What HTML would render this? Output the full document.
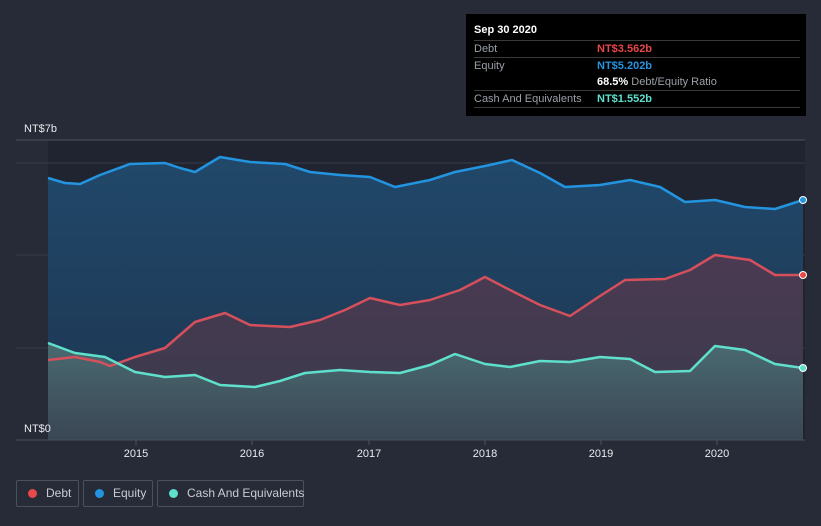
<!DOCTYPE html>
<html><head><style>
html,body{margin:0;width:821px;height:526px;overflow:hidden}
body{background:#262b37;font-family:"Liberation Sans",sans-serif;position:relative}
.tt{position:absolute;left:466px;top:14px;width:340px;height:102px;background:#000;color:#fff;font-size:11px}
.tt .r{position:absolute;left:8px;right:6px;border-top:1px solid #3a3a3a;height:17px;line-height:17px}
.lab{color:#9aa0a8}
.leg{position:absolute;top:480px;height:27px;border:1px solid #4a505c;border-radius:2px;color:#c8ccd2;font-size:12px;line-height:25px;box-sizing:border-box;white-space:nowrap}
.dot{display:inline-block;width:9px;height:9px;border-radius:50%;margin:0 9px 0 11px;vertical-align:-1px}
</style></head><body>
<svg width="821" height="526" style="position:absolute;left:0;top:0">
<defs>
<linearGradient id="ge" x1="0" y1="0" x2="0" y2="1"><stop offset="0" stop-color="#21486a"/><stop offset="1" stop-color="#1d3550"/></linearGradient>
<linearGradient id="gd" x1="0" y1="0" x2="0" y2="1"><stop offset="0" stop-color="#4a3a52"/><stop offset="1" stop-color="#3a3a4c"/></linearGradient>
<linearGradient id="gc" x1="0" y1="0" x2="0" y2="1"><stop offset="0" stop-color="#4a6a70"/><stop offset="1" stop-color="#3a4654"/></linearGradient>
</defs>
<rect x="48" y="140" width="757" height="300" fill="#1f2430"/>
<line x1="16" y1="140" x2="805" y2="140" stroke="#4a505c"/>
<line x1="16" y1="163" x2="805" y2="163" stroke="#363c48"/>
<line x1="16" y1="255" x2="805" y2="255" stroke="#363c48"/>
<line x1="16" y1="348" x2="805" y2="348" stroke="#363c48"/>
<polygon fill="url(#ge)" points="48,178 65,183 80,184 100,175 130,164 165,163 180,168 195,172 220,157 250,162 285,164 310,172 340,175 370,177 395,187 430,180 455,172 485,166 512,160 540,173 565,187 600,185 630,180 660,187 685,202 715,200 745,207 775,209 803,200 803,440 48,440"/>
<polygon fill="url(#gd)" points="48,360 75,357 100,362 110,366 135,357 165,348 195,322 225,313 250,325 290,327 320,320 345,310 370,298 400,305 430,300 460,290 485,277 510,290 540,305 570,316 600,296 625,280 665,279 690,270 715,255 750,260 775,275 803,275 803,440 48,440"/>
<polygon fill="url(#gc)" points="48,343 75,353 105,357 135,372 165,377 195,375 220,385 255,387 280,381 305,373 340,370 370,372 400,373 430,365 455,354 485,364 510,367 540,361 570,362 600,357 630,359 655,372 690,371 715,346 745,350 775,364 803,368 803,440 48,440"/>
<g fill="none" stroke-width="2.5" stroke-linejoin="round">
<polyline stroke="#2394df" points="48,178 65,183 80,184 100,175 130,164 165,163 180,168 195,172 220,157 250,162 285,164 310,172 340,175 370,177 395,187 430,180 455,172 485,166 512,160 540,173 565,187 600,185 630,180 660,187 685,202 715,200 745,207 775,209 803,200"/>
<polyline stroke="#d6505c" points="48,360 75,357 100,362 110,366 135,357 165,348 195,322 225,313 250,325 290,327 320,320 345,310 370,298 400,305 430,300 460,290 485,277 510,290 540,305 570,316 600,296 625,280 665,279 690,270 715,255 750,260 775,275 803,275"/>
<polyline stroke="#5ee0cc" points="48,343 75,353 105,357 135,372 165,377 195,375 220,385 255,387 280,381 305,373 340,370 370,372 400,373 430,365 455,354 485,364 510,367 540,361 570,362 600,357 630,359 655,372 690,371 715,346 745,350 775,364 803,368"/>
</g>
<circle cx="803" cy="200" r="3.5" fill="#2394df" stroke="#fff" stroke-width="1"/>
<circle cx="803" cy="275" r="3.5" fill="#e84a4a" stroke="#fff" stroke-width="1"/>
<circle cx="803" cy="368" r="3.5" fill="#5ee0cc" stroke="#fff" stroke-width="1"/>
<line x1="16" y1="440" x2="805" y2="440" stroke="#4a505c"/>
<g stroke="#4a505c"><line x1="136" y1="440" x2="136" y2="445"/><line x1="252" y1="440" x2="252" y2="445"/><line x1="369" y1="440" x2="369" y2="445"/><line x1="485" y1="440" x2="485" y2="445"/><line x1="601" y1="440" x2="601" y2="445"/><line x1="717" y1="440" x2="717" y2="445"/></g>
<g fill="#e8eaee" font-size="11" font-family="Liberation Sans,sans-serif">
<g text-anchor="middle"><text x="136" y="457">2015</text><text x="252" y="457">2016</text><text x="369" y="457">2017</text><text x="485" y="457">2018</text><text x="601" y="457">2019</text><text x="717" y="457">2020</text></g>
<text x="24" y="132">NT$7b</text><text x="24" y="432">NT$0</text>
</g>
</svg>
<div class="tt">
<div style="position:absolute;left:8px;top:10px;font-weight:bold">Sep 30 2020</div>
<div class="r" style="top:26px"><span class="lab">Debt</span><span style="position:absolute;left:123px;color:#e8474a;font-weight:bold">NT$3.562b</span></div>
<div class="r" style="top:43px"><span class="lab">Equity</span><span style="position:absolute;left:123px;color:#2394df;font-weight:bold">NT$5.202b</span></div>
<div class="r" style="top:60px;border-top:none"><span style="position:absolute;left:123px"><b>68.5%</b> <span class="lab">Debt/Equity Ratio</span></span></div>
<div class="r" style="top:76px"><span class="lab">Cash And Equivalents</span><span style="position:absolute;left:123px;color:#5ee0cc;font-weight:bold">NT$1.552b</span></div>
<div class="r" style="top:93px;height:0"></div>
</div>
<div class="leg" style="left:16px;width:63px"><span class="dot" style="background:#e84a4a"></span>Debt</div>
<div class="leg" style="left:83px;width:70px"><span class="dot" style="background:#2394df"></span>Equity</div>
<div class="leg" style="left:157px;width:147px"><span class="dot" style="background:#5ee0cc"></span>Cash And Equivalents</div>
</body></html>
